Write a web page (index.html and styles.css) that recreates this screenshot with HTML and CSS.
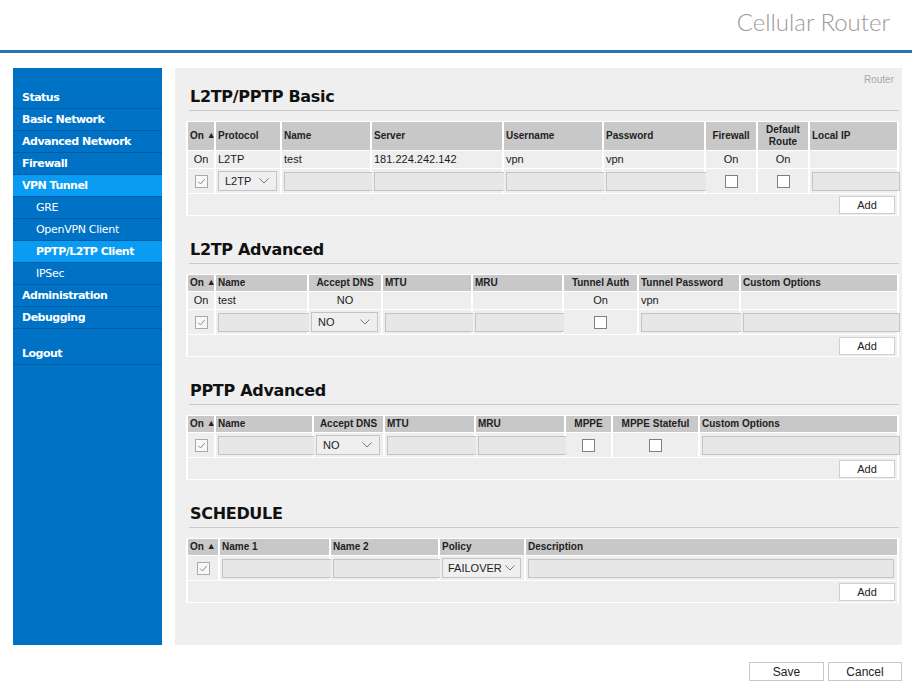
FILE: index.html
```html
<!DOCTYPE html>
<html>
<head>
<meta charset="utf-8">
<title>Cellular Router</title>
<link rel="stylesheet" href="styles.css">
</head>
<body>
<header class="top"><div class="brand">Cellular Router</div></header>
<div class="layout">
  <nav class="side">
    <div class="nav-item">Status</div>
    <div class="nav-item">Basic Network</div>
    <div class="nav-item">Advanced Network</div>
    <div class="nav-item">Firewall</div>
    <div class="nav-item on">VPN Tunnel</div>
    <div class="nav-item sub">GRE</div>
    <div class="nav-item sub">OpenVPN Client</div>
    <div class="nav-item sub cur on">PPTP/L2TP Client</div>
    <div class="nav-item sub">IPSec</div>
    <div class="nav-item">Administration</div>
    <div class="nav-item">Debugging</div>
    <div class="nav-gap"></div>
    <div class="nav-item">Logout</div>
  </nav>
  <main class="panel">
    <div class="crumb">Router</div>

    <section class="sec">
      <h2>L2TP/PPTP Basic</h2>
      <table class="grid t1">
        <colgroup><col class="c1"><col class="c2"><col class="c3"><col class="c4"><col class="c5"><col class="c6"><col class="c7"><col class="c8"><col></colgroup>
        <tr class="hd">
          <th>On <span class="tri">▲</span></th><th>Protocol</th><th>Name</th><th>Server</th><th>Username</th><th>Password</th><th class="ctr">Firewall</th><th class="ctr">Default<br>Route</th><th>Local IP</th>
        </tr>
        <tr class="dt">
          <td class="ctr">On</td><td>L2TP</td><td>test</td><td>181.224.242.142</td><td>vpn</td><td>vpn</td><td class="ctr">On</td><td class="ctr">On</td><td></td>
        </tr>
        <tr class="ed">
          <td class="ctr"><span class="cb chk"><svg viewBox="0 0 11 11" width="11" height="11"><polyline points="2.2,5.6 4.6,8 8.8,2.8" fill="none" stroke="#8c8c8c" stroke-width="1"/></svg></span></td>
          <td><span class="sel">L2TP<svg class="chev" viewBox="0 0 10 6" width="10" height="6"><polyline points="0.5,0.5 5,5 9.5,0.5" fill="none" stroke="#7a7a7a" stroke-width="1"/></svg></span></td>
          <td class="in"><span class="inp"></span></td>
          <td class="in"><span class="inp"></span></td>
          <td class="in"><span class="inp"></span></td>
          <td class="in"><span class="inp"></span></td>
          <td class="ctr"><span class="cb"></span></td>
          <td class="ctr"><span class="cb"></span></td>
          <td class="in"><span class="inp"></span></td>
        </tr>
        <tr class="ad"><td colspan="9"><span class="btn">Add</span></td></tr>
      </table>
    </section>

    <section class="sec">
      <h2>L2TP Advanced</h2>
      <table class="grid t2">
        <colgroup><col class="c1"><col class="c2"><col class="c3"><col class="c4"><col class="c5"><col class="c6"><col class="c7"><col></colgroup>
        <tr class="hd">
          <th>On <span class="tri">▲</span></th><th>Name</th><th class="ctr">Accept DNS</th><th>MTU</th><th>MRU</th><th class="ctr">Tunnel Auth</th><th>Tunnel Password</th><th>Custom Options</th>
        </tr>
        <tr class="dt">
          <td class="ctr">On</td><td>test</td><td class="ctr">NO</td><td></td><td></td><td class="ctr">On</td><td>vpn</td><td></td>
        </tr>
        <tr class="ed">
          <td class="ctr"><span class="cb chk"><svg viewBox="0 0 11 11" width="11" height="11"><polyline points="2.2,5.6 4.6,8 8.8,2.8" fill="none" stroke="#8c8c8c" stroke-width="1"/></svg></span></td>
          <td class="in"><span class="inp"></span></td>
          <td><span class="sel">NO<svg class="chev" viewBox="0 0 10 6" width="10" height="6"><polyline points="0.5,0.5 5,5 9.5,0.5" fill="none" stroke="#7a7a7a" stroke-width="1"/></svg></span></td>
          <td class="in"><span class="inp"></span></td>
          <td class="in"><span class="inp"></span></td>
          <td class="ctr"><span class="cb"></span></td>
          <td class="in"><span class="inp"></span></td>
          <td class="in"><span class="inp"></span></td>
        </tr>
        <tr class="ad"><td colspan="8"><span class="btn">Add</span></td></tr>
      </table>
    </section>

    <section class="sec">
      <h2>PPTP Advanced</h2>
      <table class="grid t3">
        <colgroup><col class="c1"><col class="c2"><col class="c3"><col class="c4"><col class="c5"><col class="c6"><col class="c7"><col></colgroup>
        <tr class="hd">
          <th>On <span class="tri">▲</span></th><th>Name</th><th class="ctr">Accept DNS</th><th>MTU</th><th>MRU</th><th class="ctr">MPPE</th><th class="ctr">MPPE Stateful</th><th>Custom Options</th>
        </tr>
        <tr class="ed">
          <td class="ctr"><span class="cb chk"><svg viewBox="0 0 11 11" width="11" height="11"><polyline points="2.2,5.6 4.6,8 8.8,2.8" fill="none" stroke="#8c8c8c" stroke-width="1"/></svg></span></td>
          <td class="in"><span class="inp"></span></td>
          <td><span class="sel">NO<svg class="chev" viewBox="0 0 10 6" width="10" height="6"><polyline points="0.5,0.5 5,5 9.5,0.5" fill="none" stroke="#7a7a7a" stroke-width="1"/></svg></span></td>
          <td class="in"><span class="inp"></span></td>
          <td class="in"><span class="inp"></span></td>
          <td class="ctr"><span class="cb"></span></td>
          <td class="ctr"><span class="cb"></span></td>
          <td class="in"><span class="inp"></span></td>
        </tr>
        <tr class="ad"><td colspan="8"><span class="btn">Add</span></td></tr>
      </table>
    </section>

    <section class="sec">
      <h2>SCHEDULE</h2>
      <table class="grid t4">
        <colgroup><col class="c1"><col class="c2"><col class="c3"><col class="c4"><col></colgroup>
        <tr class="hd">
          <th>On <span class="tri">▲</span></th><th>Name 1</th><th>Name 2</th><th>Policy</th><th>Description</th>
        </tr>
        <tr class="ed">
          <td class="ctr"><span class="cb chk"><svg viewBox="0 0 11 11" width="11" height="11"><polyline points="2.2,5.6 4.6,8 8.8,2.8" fill="none" stroke="#8c8c8c" stroke-width="1"/></svg></span></td>
          <td class="in"><span class="inp"></span></td>
          <td class="in"><span class="inp"></span></td>
          <td><span class="sel wide">FAILOVER<svg class="chev" viewBox="0 0 10 6" width="10" height="6"><polyline points="0.5,0.5 5,5 9.5,0.5" fill="none" stroke="#7a7a7a" stroke-width="1"/></svg></span></td>
          <td class="in"><span class="inp desc"></span></td>
        </tr>
        <tr class="ad"><td colspan="5"><span class="btn">Add</span></td></tr>
      </table>
    </section>
  </main>
</div>
<footer class="foot">
  <span class="fbtn save">Save</span>
  <span class="fbtn cancel">Cancel</span>
</footer>
</body>
</html>
```

FILE: styles.css
```css
* { box-sizing: border-box; }
html, body { margin: 0; padding: 0; background: #ffffff; }
body {
  width: 912px;
  font-family: "Liberation Sans", Arial, sans-serif;
  color: #1a1a1a;
}

/* header */
.top {
  height: 53px;
  border-bottom: 3px solid #1f77b4;
  display: flex;
  justify-content: flex-end;
  align-items: flex-start;
  padding-right: 22px;
}
.brand {
  margin-top: 8px;
  font-family: Lato, "Open Sans", sans-serif;
  font-weight: 300;
  font-size: 24px;
  line-height: 28px;
  color: #9a9a9a;
}

/* layout */
.layout {
  display: flex;
  gap: 13px;
  padding-left: 13px;
  margin-top: 15px;
}

/* sidebar */
.side {
  width: 149px;
  height: 577px;
  background: #0072c6;
  padding-top: 19px;
  font-family: "DejaVu Sans", Verdana, sans-serif;
  font-size: 11px;
}
.nav-item {
  height: 22px;
  line-height: 22px;
  border-bottom: 1px solid #005ea6;
  color: #ffffff;
  font-weight: bold;
  padding-left: 9px;
  letter-spacing: -0.5px;
  white-space: nowrap;
}
.nav-item.sub { padding-left: 23px; font-weight: normal; letter-spacing: -0.3px; }
.nav-item.cur { font-weight: bold; letter-spacing: -0.5px; }
.nav-item.on { background: #0a9cf2; }
.nav-gap { height: 14px; }

/* panel */
.panel {
  width: 727px;
  height: 577px;
  background: #efefef;
  padding: 0 3px 0 11px;
}
.crumb {
  height: 19px;
  padding: 6px 5px 0 0;
  text-align: right;
  font-size: 10px;
  line-height: 12px;
  color: #a8a8a8;
}
.sec + .sec { margin-top: 24px; }
.sec h2 {
  margin: 0 0 0 3px;
  padding: 0 0 3px 1px;
  font-family: "DejaVu Sans", Verdana, sans-serif;
  font-weight: bold;
  font-size: 16px;
  line-height: 20px;
  letter-spacing: -0.3px;
  color: #111111;
  border-bottom: 1px solid #cacaca;
}

/* tables */
.grid {
  margin-top: 10px;
  width: 713px;
  table-layout: fixed;
  border-collapse: separate;
  border-spacing: 2px 1px;
  background: #ffffff;
}
.grid th {
  background: #c8c8c8;
  font-size: 10px;
  font-weight: bold;
  line-height: 12px;
  height: 16px;
  padding: 2px 2px;
  text-align: left;
  color: #222222;
  white-space: nowrap;
  overflow: visible;
}
.grid td {
  background: #eeeeee;
  font-size: 11px;
  padding: 0 2px;
  color: #1a1a1a;
  white-space: nowrap;
  vertical-align: middle;
}
.grid .ctr { text-align: center; }
.tri { font-size: 9px; position: relative; top: -1px; }
.dt td { height: 17px; line-height: 17px; }
.ed td { height: 24px; padding: 0 0 0 2px; }
.ed td.ctr { padding: 0; }
.ad td { height: 21px; text-align: right; padding: 0 2px 0 0; }

.t1 .c1 { width: 26px; } .t1 .c2 { width: 64px; } .t1 .c3 { width: 88px; } .t1 .c4 { width: 130px; }
.t1 .c5 { width: 98px; } .t1 .c6 { width: 100px; } .t1 .c7 { width: 50px; } .t1 .c8 { width: 50px; }
.t2 .c1 { width: 26px; } .t2 .c2 { width: 91px; } .t2 .c3 { width: 72px; } .t2 .c4 { width: 88px; }
.t2 .c5 { width: 89px; } .t2 .c6 { width: 73px; } .t2 .c7 { width: 100px; }
.t3 .c1 { width: 26px; } .t3 .c2 { width: 96px; } .t3 .c3 { width: 69px; } .t3 .c4 { width: 89px; }
.t3 .c5 { width: 88px; } .t3 .c6 { width: 45px; } .t3 .c7 { width: 85px; }
.t4 .c1 { width: 30px; } .t4 .c2 { width: 109px; } .t4 .c3 { width: 107px; } .t4 .c4 { width: 84px; }

.inp {
  display: block;
  height: 19px;
  width: calc(100% + 3px);
  background: #e7e7e7;
  border: 1px solid #c4c4c4;
}
.inp.desc { width: calc(100% - 3px); }
.sel {
  display: flex;
  align-items: center;
  justify-content: space-between;
  height: 20px;
  width: calc(100% - 3px);
  background: #efefef;
  border: 1px solid #c4c4c4;
  padding: 0 7px 0 6px;
  font-size: 11px;
  color: #222222;
}
.sel.wide { padding: 0 5px 0 5px; }
.chev { display: block; flex: none; }
.cb {
  display: inline-block;
  vertical-align: middle;
  width: 13px;
  height: 13px;
  background: #ffffff;
  border: 1px solid #7f7f7f;
}
.cb.chk {
  background: #f8f8f8;
  border-color: #a9a9a9;
}
.cb svg { display: block; }
.btn {
  display: inline-block;
  vertical-align: middle;
  width: 56px;
  height: 18px;
  line-height: 16px;
  text-align: center;
  background: #ffffff;
  border: 1px solid #cfcfcf;
  font-size: 11px;
  color: #222222;
}

/* footer */
.foot {
  display: flex;
  justify-content: flex-end;
  gap: 4px;
  padding-right: 10px;
  margin-top: 17px;
}
.fbtn {
  display: block;
  height: 19px;
  line-height: 18px;
  text-align: center;
  background: #ffffff;
  border: 1px solid #c8c8c8;
  font-size: 12px;
  color: #222222;
}
.save { width: 75px; }
.cancel { width: 74px; }
```
